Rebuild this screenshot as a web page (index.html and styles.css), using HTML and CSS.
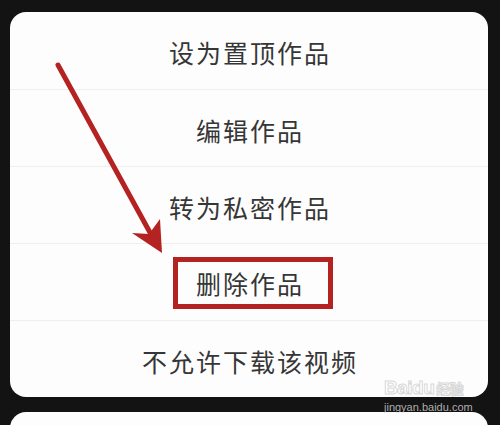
FILE: index.html
```html
<!DOCTYPE html>
<html lang="zh">
<head>
<meta charset="utf-8">
<link rel="stylesheet" href="styles.css">
</head>
<body>
<div class="screen">
  <div class="sheet">
    <div class="row">设为置顶作品</div>
    <div class="row">编辑作品</div>
    <div class="row">转为私密作品</div>
    <div class="row"><span class="marked">删除作品</span></div>
    <div class="row">不允许下载该视频</div>
  </div>
  <div class="sheet2"></div>

  <svg class="arrow" width="500" height="425" viewBox="0 0 500 425" xmlns="http://www.w3.org/2000/svg">
    <line x1="58" y1="65" x2="153" y2="238" stroke="#b42222" stroke-width="5" stroke-linecap="round"/>
    <polygon points="162,253 132,233 149,234 160,219" fill="#b42222"/>
  </svg>

  <div class="watermark">
    <div class="wm-logo">Bai<span class="paw">du</span><span class="wm-cn">经验</span></div>
    <div class="wm-url">jingyan.baidu.com</div>
  </div>
</div>
</body>
</html>
```
FILE: styles.css
```css
html, body {
  margin: 0;
  padding: 0;
  background: #121212;
}
.screen {
  position: relative;
  width: 500px;
  height: 425px;
  overflow: hidden;
  background: #131313;
  padding-top: 12px;
  box-sizing: border-box;
  font-family: "Noto Sans CJK SC", "Noto Sans", sans-serif;
}
.sheet {
  margin-left: 10px;
  width: 478px;
  background: #fdfdfd;
  border-radius: 16px;
  display: flex;
  flex-direction: column;
}
.row {
  height: 77px;
  box-sizing: border-box;
  display: flex;
  align-items: center;
  justify-content: center;
  font-size: 25px;
  letter-spacing: 2px;
  padding-left: 2px;
  color: #363636;
  padding-top: 3px;
}
.row + .row {
  border-top: 1px solid #efefef;
}
.marked {
  display: inline-flex;
  align-items: center;
  box-sizing: border-box;
  height: 52px;
  width: 160px;
  border: 5px solid #b42222;
  padding-left: 18px;
  margin-left: 6px;
  margin-top: -2px;
}
.sheet2 {
  margin-top: 15px;
  margin-left: 10px;
  width: 478px;
  height: 40px;
  background: #fdfdfd;
  border-radius: 16px 16px 0 0;
}
.arrow {
  position: absolute;
  left: 0;
  top: 0;
}
.watermark {
  position: absolute;
  left: 384px;
  top: 378px;
  font-family: "Liberation Sans", sans-serif;
}
.wm-logo {
  font-size: 19px;
  font-weight: bold;
  line-height: 20px;
  letter-spacing: -0.5px;
  color: rgba(255, 255, 255, 0.9);
  -webkit-text-stroke: 1px rgba(190, 190, 190, 0.6);
}
.wm-cn {
  font-family: "Noto Sans CJK SC", sans-serif;
  font-size: 14px;
  margin-left: 2px;
}
.wm-url {
  font-size: 11px;
  line-height: 12px;
  margin-top: 3px;
  color: rgba(215, 215, 215, 0.8);
}
```
